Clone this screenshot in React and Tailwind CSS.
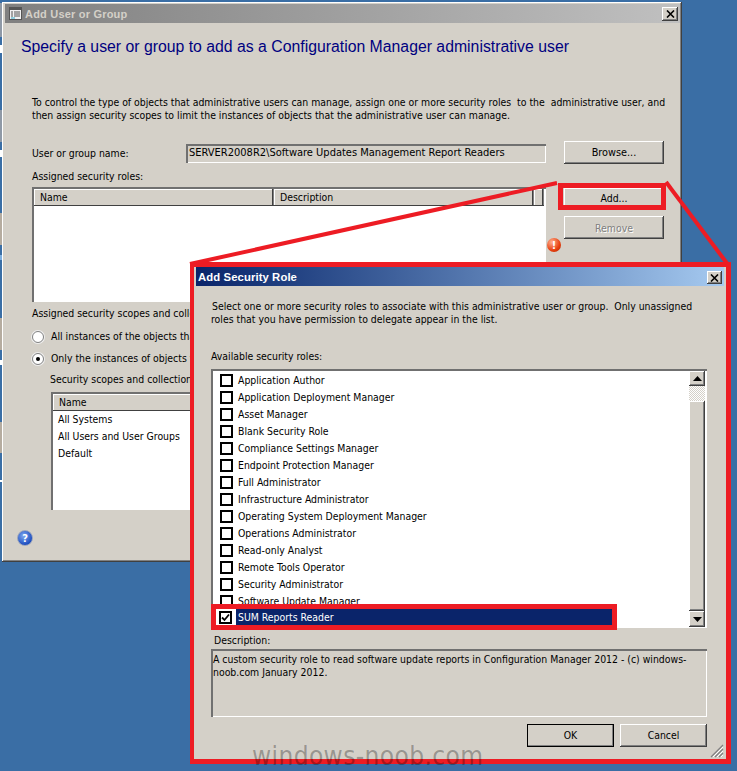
import React from "react";

const bevelOut = "shadow-[inset_-1px_-1px_0_#404040,inset_1px_1px_0_#ffffff,inset_-2px_-2px_0_#808080,inset_2px_2px_0_#d4d0c8]";
const thinIn = "shadow-[inset_2px_2px_0_#707070,inset_-1px_-1px_0_#ffffff]";

function Btn({ children, className = "", disabled }) {
  return (
    <div className={`flex items-center justify-center bg-[#d4d0c8] ${bevelOut} ${disabled ? "text-[#808080] [text-shadow:1px_1px_0_#fff]" : "text-black"} ${className}`}>
      {children}
    </div>
  );
}

function CloseBtn({ className = "" }) {
  return (
    <div className={`flex items-center justify-center bg-[#d4d0c8] ${bevelOut} ${className}`}>
      <svg width="9" height="8" viewBox="0 0 9 8"><path d="M1 0.5 L8 7.5 M8 0.5 L1 7.5" stroke="#000" strokeWidth="1.6" /></svg>
    </div>
  );
}

function Header({ cols }) {
  return (
    <div className="flex h-[17px] bg-[#d4d0c8] border-b border-[#404040]">
      {cols.map(([name, w], i) => (
        <div key={i} className="h-[16px] pl-[6px] pt-[2px] flex items-center shadow-[inset_-1px_0_0_#808080,inset_-2px_0_0_#404040,inset_1px_1px_0_#ffffff] shrink-0" style={{ width: w }}>
          {name}
        </div>
      ))}
    </div>
  );
}

function Radio({ checked }) {
  return (
    <div className="w-[12px] h-[12px] rounded-full bg-white border border-[#808080] shadow-[0_0_0_1px_#eeeeee] flex items-center justify-center shrink-0">
      {checked && <div className="w-[4px] h-[4px] rounded-full bg-black" />}
    </div>
  );
}

function Check({ checked }) {
  return (
    <div className="w-[13px] h-[13px] border-2 border-black bg-white flex items-center justify-center shrink-0">
      {checked && (
        <svg width="9" height="9" viewBox="0 0 9 9"><path d="M1 4.5 L3.5 7 L8 1.5" fill="none" stroke="#000" strokeWidth="1.8" /></svg>
      )}
    </div>
  );
}

const roles = [
  "Application Author", "Application Deployment Manager", "Asset Manager", "Blank Security Role",
  "Compliance Settings Manager", "Endpoint Protection Manager", "Full Administrator",
  "Infrastructure Administrator", "Operating System Deployment Manager", "Operations Administrator",
  "Read-only Analyst", "Remote Tools Operator", "Security Administrator", "Software Update Manager",
];

const slivers = [
  [3, 34, "bg-[#8f99a6]"], [45, 8, "bg-white"], [110, 32, "bg-[#8f99a6]"], [150, 7, "bg-white"],
  [213, 32, "bg-[#b5aca0]"], [255, 5, "bg-[#7fb0e0]"], [318, 32, "bg-[#b5aca0]"], [360, 5, "bg-white"],
  [422, 31, "bg-[#b5aca0]"], [480, 2, "bg-white"],
];

function LeftWindow() {
  return (
    <div className={`absolute left-[2px] top-[2px] w-[680px] h-[560px] bg-[#d4d0c8] p-[2px] pl-[3px] ${bevelOut}`}>
      <div className="h-[19px] bg-gradient-to-r from-[#808080] to-[#c0c0c0] flex items-center pl-[4px] gap-[3px] relative">
        <svg width="13" height="13" viewBox="0 0 13 13">
          <rect x="0.5" y="0.5" width="12" height="12" fill="#f0f0f0" stroke="#555" />
          <rect x="0" y="0" width="13" height="3" fill="#555" />
          <path d="M2 5h2M5 5h6M2 7h2M5 7h6M2 9h2M5 9h6" stroke="#555" />
          <path d="M2 11h4" stroke="#2aa8c8" />
        </svg>
        <span className="font-bold text-[#d4d0c8] text-[11px] tracking-[0.2px] pt-[1px] font-['Liberation_Sans',sans-serif]">Add User or Group</span>
        <CloseBtn className="absolute right-[2px] top-[3px] w-[16px] h-[14px]" />
      </div>
      <div className="pl-[27px] pr-[15px]">
        <div className="-ml-[11px] mt-[14px] h-[19px] leading-[20px] text-[15.8px] text-[#000080] whitespace-nowrap font-['Liberation_Sans',sans-serif]">
          Specify a user or group to add as a Configuration Manager administrative user
        </div>
        <div className="mt-[40px] leading-[13px] whitespace-nowrap">
          <div>To control the type of objects that administrative users can manage, assign one or more security roles&nbsp; to the&nbsp; administrative user, and</div>
          <div>then assign security scopes to limit the instances of objects that the administrative user can manage.</div>
        </div>
        <div className="mt-[19px] flex items-center h-[23px]">
          <div className="w-[154px] pt-[2px]">User or group name:</div>
          <div className={`w-[360px] h-[19px] mt-[2px] pl-[3px] flex items-center whitespace-nowrap text-[11px] ${thinIn}`}>SERVER2008R2\Software Updates Management Report Readers</div>
          <Btn className="ml-[18px] w-[100px] h-[23px] pt-[2px] text-[10.8px]">Browse...</Btn>
        </div>
        <div className="mt-[6px] leading-[13px]">Assigned security roles:</div>
        <div className="mt-[4px] flex">
          <div className={`w-[514px] h-[115px] bg-white p-[2px] ${thinIn}`}>
            <Header cols={[["Name", 240], ["Description", 260], ["", 10]]} />
          </div>
          <div className="relative ml-[18px] w-[100px] pt-[1px] flex flex-col gap-[6px]">
            <Btn className="w-[100px] h-[22px]">Add...</Btn>
            <Btn className="w-[100px] h-[23px] pt-[2px]" disabled>Remove</Btn>
            <div className="absolute left-[-17px] top-[51px] w-[14px] h-[14px] rounded-full bg-[radial-gradient(circle_at_35%_30%,#ffb090,#e8400f_60%,#b02000)] flex items-center justify-center text-white font-bold text-[11px] leading-none">!</div>
          </div>
        </div>
        <div className="mt-[5px] leading-[13px]">Assigned security scopes and collections:</div>
        <div className="mt-[10px] h-[13px] flex items-center gap-[7px] whitespace-nowrap"><Radio /><span>All instances of the objects that are related to the assigned security roles</span></div>
        <div className="mt-[9px] h-[13px] flex items-center gap-[7px] whitespace-nowrap"><Radio checked /><span>Only the instances of objects that are assigned to the specified security scopes</span></div>
        <div className="mt-[8px] ml-[18px] leading-[13px] whitespace-nowrap">Security scopes and collections:</div>
        <div className={`mt-[6px] ml-[19px] w-[300px] h-[118px] bg-white p-[2px] ${thinIn}`}>
          <Header cols={[["Name", 296]]} />
          <div className="pl-[5px] leading-[17px]">
            <div>All Systems</div>
            <div>All Users and User Groups</div>
            <div>Default</div>
          </div>
        </div>
        <div className="-ml-[15px] mt-[20px] w-[16px] h-[16px] rounded-full bg-[radial-gradient(circle_at_40%_35%,#7fa8f0,#1f4fc0_70%)] border border-[#9aa4bc] flex items-center justify-center text-white font-bold text-[11px] leading-none">?</div>
      </div>
    </div>
  );
}

function Dialog() {
  return (
    <div className="absolute left-[190px] top-[262px] w-[541px] h-[502px] border-[5px] border-l-4 border-[#ed1c24] bg-[#d4d0c8]">
      <div className="mx-[2px] h-[19px] bg-gradient-to-r from-[#0a246a] to-[#a6caf0] flex items-center pl-[2px] relative">
        <span className="font-bold text-white text-[11.3px] tracking-[0.1px] pt-[1px] font-['Liberation_Sans',sans-serif]">Add Security Role</span>
        <CloseBtn className="absolute right-[2px] top-[4px] w-[15px] h-[13px]" />
      </div>
      <div className="px-[17px] relative">
        <div className="mt-[14px] leading-[13px] whitespace-nowrap">
          <div className="pl-[1px]">Select one or more security roles to associate with this administrative user or group.&nbsp; Only unassigned</div>
          <div>roles that you have permission to delegate appear in the list.</div>
        </div>
        <div className="mt-[24px] leading-[13px]">Available security roles:</div>
        <div className="mt-[6px] relative w-[496px] h-[259px]">
          <div className={`w-full h-full bg-white overflow-hidden flex ${thinIn}`}>
            <div className="flex-1 pt-[3px] pl-[9px]">
              {roles.map((r) => (
                <div key={r} className="h-[17px] flex items-center gap-[5px] whitespace-nowrap"><Check /><span>{r}</span></div>
              ))}
            </div>
            <div className="w-[16px] mr-[2px] mt-[2px] flex flex-col">
              <Btn className="h-[15px] shrink-0"><svg width="9" height="5" viewBox="0 0 9 5"><path d="M4.5 0 L9 5 H0 Z" /></svg></Btn>
              <div className="h-[15px] shrink-0 bg-[repeating-conic-gradient(#d4d0c8_0_25%,#ffffff_0_50%)] bg-[length:2px_2px]" />
              <div className={`flex-1 bg-[#d4d0c8] ${bevelOut}`} />
              <Btn className="h-[16px] shrink-0 mb-[1px]"><svg width="9" height="5" viewBox="0 0 9 5"><path d="M4.5 5 L9 0 H0 Z" /></svg></Btn>
            </div>
          </div>
          <div className="absolute left-0 top-[235px] w-[406px] h-[26px] border-[5px] border-[#ed1c24] bg-white flex items-stretch">
            <div className="w-[20px] pl-[3px] flex items-center shrink-0"><Check checked /></div>
            <div className="flex-1 bg-[#0a246a] text-white pl-[2px] flex items-center pt-[2px]">SUM Reports Reader</div>
          </div>
        </div>
        <div className="mt-[6px] ml-[3px] leading-[13px]">Description:</div>
        <div className={`mt-[2px] w-[496px] h-[68px] pt-[4px] pl-[2px] leading-[13px] ${thinIn}`}>
          <div className="whitespace-nowrap">A custom security role to read software update reports in Configuration Manager 2012 - (c) windows-</div>
          <div className="whitespace-nowrap">noob.com January 2012.</div>
        </div>
        <div className="mt-[7px] w-[496px] flex justify-end gap-[6px]">
          <Btn className="w-[87px] h-[23px] pt-[1px] outline outline-1 -outline-offset-1 outline-black">OK</Btn>
          <Btn className="w-[87px] h-[23px] pt-[1px]">Cancel</Btn>
        </div>
      </div>
      <svg className="absolute right-[2px] bottom-[1px]" width="14" height="14" viewBox="0 0 14 14">
        <path d="M13 1 L1 13 M13 5 L5 13 M13 9 L9 13" stroke="#808080" strokeWidth="1.2" />
        <path d="M13 3 L3 13 M13 7 L7 13 M13 11 L11 13" stroke="#ffffff" strokeWidth="1" />
      </svg>
    </div>
  );
}

export default function App() {
  return (
    <div className="relative w-[737px] h-[771px] overflow-hidden bg-[#3a6ea5] text-[10.4px] text-black font-['DejaVu_Sans_Condensed','DejaVu_Sans',sans-serif]">
      {slivers.map(([y, h, c]) => (
        <div key={y} className={`absolute left-0 w-[2px] ${c}`} style={{ top: y, height: h }} />
      ))}
      <LeftWindow />
      <Dialog />
      <svg className="absolute inset-0 pointer-events-none" width="737" height="771" viewBox="0 0 737 771">
        <rect x="560.5" y="185.5" width="103" height="22" fill="none" stroke="#ed1c24" strokeWidth="5" />
        <path d="M557 183 L190 264" stroke="#ed1c24" strokeWidth="4" />
        <path d="M666 182 L729 266" stroke="#ed1c24" strokeWidth="4" />
      </svg>
      <div className="absolute left-[252px] top-[738px] text-[26px] leading-[36px] tracking-[0.4px] text-black/30 font-['DejaVu_Sans_Condensed',sans-serif] whitespace-nowrap">windows-noob.com</div>
    </div>
  );
}
